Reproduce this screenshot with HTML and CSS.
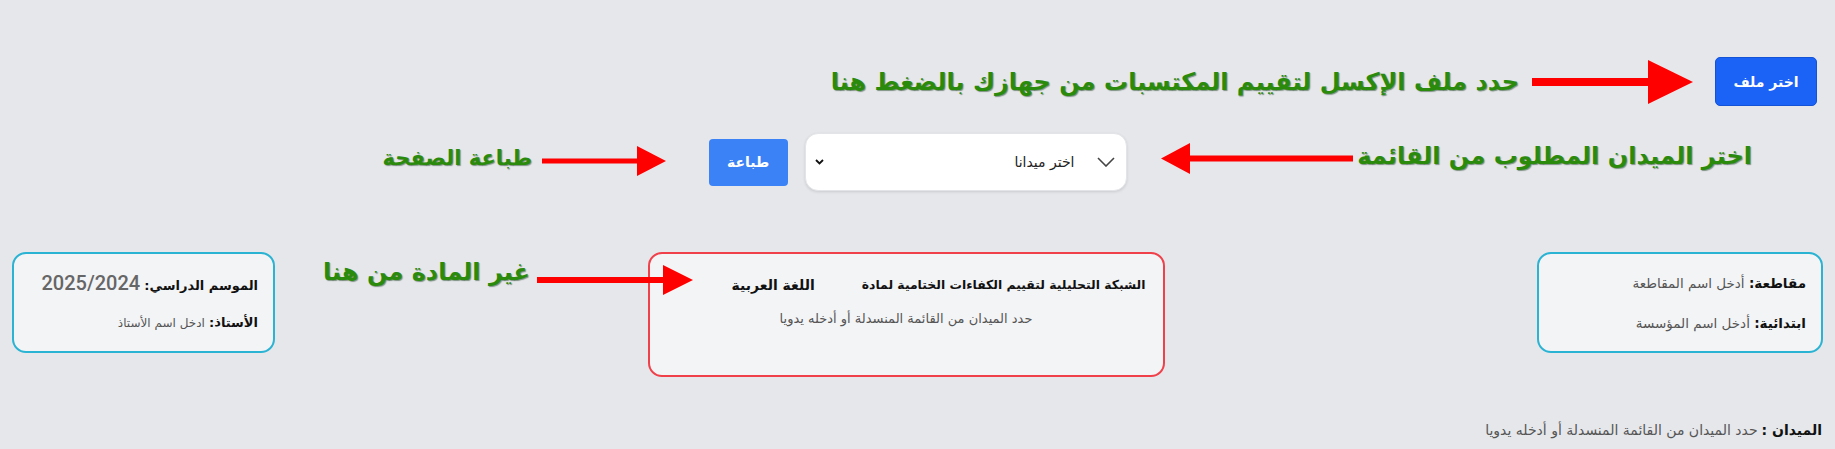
FILE: index.html
```html
<!DOCTYPE html>
<html lang="ar" dir="rtl">
<head>
<meta charset="utf-8">
<title>الشبكة التحليلية</title>
<link rel="stylesheet" href="styles.css">
</head>
<body>
<div class="page">
  <div class="topbar">
    <button class="btn btn-file">اختر ملف</button>
  </div>

  <div class="controls">
    <div class="select">
      <svg class="chev" width="18" height="10" viewBox="0 0 18 10"><path d="M1 1 L9 9 L17 1" fill="none" stroke="#444" stroke-width="1.6"/></svg>
      <span class="select-text">اختر ميدانا</span>
      <svg class="native-chev" width="9" height="6" viewBox="0 0 9 6"><path d="M1 1 L4.5 4.5 L8 1" fill="none" stroke="#111" stroke-width="1.8"/></svg>
    </div>
    <button class="btn btn-print">طباعة</button>
  </div>

  <div class="header">
    <div class="card card-info card-right">
      <div class="line"><b>مقاطعة:</b> <span class="muted">أدخل اسم المقاطعة</span></div>
      <div class="line"><b>ابتدائية:</b> <span class="muted">أدخل اسم المؤسسة</span></div>
    </div>
    <div class="card card-title">
      <div class="title-line">
        <b class="title">الشبكة التحليلية لتقييم الكفاءات الختامية لمادة</b>
        <b class="subject">اللغة العربية</b>
      </div>
      <div class="sub-line">حدد الميدان من القائمة المنسدلة أو أدخله يدويا</div>
    </div>
    <div class="card card-info card-left">
      <div class="line"><b>الموسم الدراسي:</b> <span class="year">2025/2024</span></div>
      <div class="line"><b>الأستاذ:</b> <span class="muted">ادخل اسم الأستاذ</span></div>
    </div>
  </div>

  <div class="field-line"><b>الميدان :</b><span class="muted">حدد الميدان من القائمة المنسدلة أو أدخله يدويا</span></div>

  <div class="notes">
    <div class="note note-1">حدد ملف الإكسل لتقييم المكتسبات من جهازك بالضغط هنا</div>
    <svg class="arrow arrow-1" width="162" height="44" viewBox="0 0 162 44"><rect x="0" y="18" width="118" height="8" fill="#ff0000"/><polygon points="116,0 161,22 116,44" fill="#ff0000"/></svg>

    <div class="note note-2">اختر الميدان المطلوب من القائمة</div>
    <svg class="arrow arrow-2" width="192" height="31" viewBox="0 0 192 31"><rect x="27" y="12.5" width="165" height="6" fill="#ff0000"/><polygon points="0,15.5 29,0 29,31" fill="#ff0000"/></svg>

    <div class="note note-3">طباعة الصفحة</div>
    <svg class="arrow arrow-3" width="125" height="30" viewBox="0 0 125 30"><rect x="0" y="12.5" width="97" height="5" fill="#ff0000"/><polygon points="95,0 124,15 95,30" fill="#ff0000"/></svg>

    <div class="note note-4">غير المادة من هنا</div>
    <svg class="arrow arrow-4" width="157" height="30" viewBox="0 0 157 30"><rect x="0" y="12" width="128" height="6" fill="#ff0000"/><polygon points="126,0 156,15 126,30" fill="#ff0000"/></svg>
  </div>
</div>
</body>
</html>
```

FILE: styles.css
```css
* { box-sizing: border-box; }

html, body {
  margin: 0;
  padding: 0;
}

body {
  background: #e5e7eb;
  font-family: "DejaVu Sans", "Liberation Sans", sans-serif;
  color: #111;
  direction: rtl;
}

.page {
  position: relative;
  width: 1835px;
  height: 449px;
  overflow: hidden;
}

.topbar {
  display: flex;
  padding-top: 57px;
  padding-right: 18px;
}

.btn {
  font-family: "DejaVu Sans", sans-serif;
  font-weight: bold;
  color: #fff;
  border: none;
  cursor: pointer;
}

.btn-file {
  width: 102px;
  height: 49px;
  background: #1b62f6;
  border: 1px solid #1553d6;
  border-radius: 5px;
  font-size: 14px;
}

.controls {
  display: flex;
  justify-content: center;
  align-items: center;
  gap: 17px;
  margin-top: 27px;
}

.select {
  width: 322px;
  height: 58px;
  background: #fff;
  border: 1px solid #e2e4e8;
  border-radius: 13px;
  box-shadow: 0 1px 3px rgba(0, 0, 0, 0.12);
  display: flex;
  align-items: center;
  padding: 0 11px 0 9px;
  font-size: 14px;
  color: #222;
}

.chev { margin-left: 22px; flex: none; }

.select-text { flex: 1; text-align: right; }

.native-chev { flex: none; }

.btn-print {
  width: 79px;
  height: 47px;
  background: #3a82f6;
  border-radius: 4px;
  font-size: 14px;
}

.header {
  display: flex;
  justify-content: space-between;
  align-items: flex-start;
  padding: 0 12px;
  margin-top: 61px;
}

.card {
  background: #f3f4f6;
  border: 2px solid #2bb3d3;
  border-radius: 14px;
}

.card-info {
  height: 101px;
  padding: 19px 15px 0;
  font-size: 13px;
}

.card-right {
  width: 286px;
  font-size: 13.5px;
}

.card-left { width: 263px; }

.card-left .muted { font-size: 12px; }

.line {
  height: 20px;
  line-height: 20px;
  margin-bottom: 20px;
  white-space: nowrap;
}

.muted { color: #555; }

.year {
  color: #666;
  font-family: Roboto, "Liberation Sans", sans-serif;
  font-weight: 500;
  font-size: 20px;
  letter-spacing: 0.6px;
}

.card-title {
  width: 517px;
  height: 125px;
  border-color: #f0414b;
  padding: 21px 17px 0;
}

.title-line {
  display: flex;
  line-height: 20px;
  white-space: nowrap;
}

.title { font-size: 12.4px; }

.subject {
  font-size: 14px;
  margin-right: 47px;
}

.sub-line {
  text-align: center;
  color: #555;
  font-size: 13px;
  line-height: 20px;
  margin-top: 14px;
}

.field-line {
  margin-top: 43px;
  padding-right: 13px;
  font-size: 14px;
  line-height: 20px;
}

.field-line .muted { margin-right: 4px; }

/* annotations overlay */
.notes {
  position: absolute;
  inset: 0;
  pointer-events: none;
}

.note {
  position: absolute;
  color: #2a8a0c;
  font-weight: bold;
  font-size: 24px;
  line-height: 34px;
  white-space: nowrap;
  text-shadow: 1px 1px 1px rgba(0, 40, 0, 0.45);
}

.arrow { position: absolute; display: block; }

.note-1 { right: 316px; top: 65px; }
.arrow-1 { left: 1532px; top: 60px; }

.note-2 { right: 83px; top: 139px; }
.arrow-2 { left: 1161px; top: 143px; }

.note-3 { right: 1303px; top: 141px; font-size: 21px; }
.arrow-3 { left: 542px; top: 146px; }

.note-4 { right: 1305px; top: 255px; }
.arrow-4 { left: 537px; top: 265px; }
```
